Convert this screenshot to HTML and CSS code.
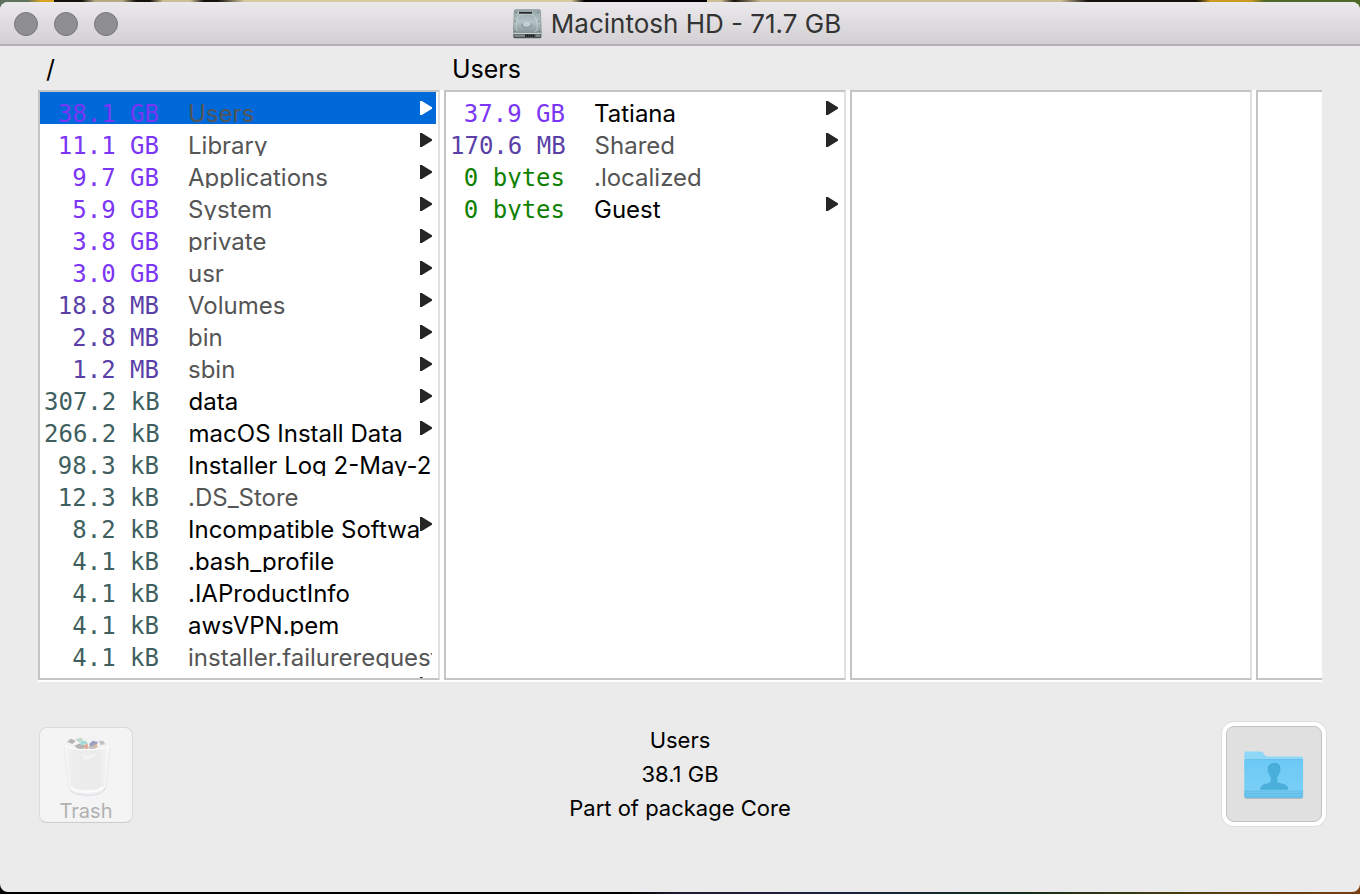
FILE: index.html
```html
<!DOCTYPE html>
<html lang="en">
<head>
  <meta charset="utf-8"/>
  <title>Macintosh HD - 71.7 GB</title>
  <link rel="stylesheet" href="styles.css">
</head>
<body>
  <div class="window">
    <header class="titlebar">
      <div class="lights">
        <button type="button" aria-label="Close"></button>
        <button type="button" aria-label="Minimize"></button>
        <button type="button" aria-label="Zoom"></button>
      </div>
      <h1>
        <svg class="drive" viewBox="102 25 87 90" aria-hidden="true">
          <defs>
            <linearGradient id="metal" x1="0" y1="0" x2="0" y2="1">
              <stop offset="0" stop-color="#94a5a9"/>
              <stop offset="0.5" stop-color="#b4c3c6"/>
              <stop offset="1" stop-color="#839194"/>
            </linearGradient>
          </defs>
          <path d="M103 98h84v11q0 4-4 4h-76q-4 0-4-4z" fill="#4b5254"/>
          <path d="M109 27h72q3 0 3 3l3 67q0 3-3 3h-78q-3 0-3-3l3-67q0-3 3-3z" fill="url(#metal)" stroke="#7f8b8e" stroke-width="2"/>
          <path d="M114 92q-6-14 0-34t28-20q22 0 28 14t4 36l-8 6" fill="none" stroke="#cbd8da" stroke-width="2"/>
          <rect x="118" y="32" width="44" height="9" fill="#d4dddd"/>
          <path d="M120 33h40v6h-40z" fill="#24292b"/>
          <path d="M129 71q6-9 14-9t14 9l3 5q-7 8-17 8t-17-8z" fill="#8e9da1"/>
          <ellipse cx="143" cy="70" rx="11" ry="8" fill="#c3cfd1"/>
          <path d="M103 98h84v2h-84z" fill="#dce4e5"/>
          <path d="M106 102h32v6h-32z" fill="#838e91"/>
          <path d="M138 105h30" stroke="#141718" stroke-width="7" stroke-dasharray="4 2"/>
          <path d="M170 102h14v6h-14z" fill="#838e91"/>
          <g fill="#566164"><circle cx="111" cy="35" r="2"/><circle cx="177" cy="35" r="2"/><circle cx="109" cy="62" r="2"/><circle cx="180" cy="62" r="2"/><circle cx="108" cy="92" r="2"/><circle cx="181" cy="92" r="2"/></g>
        </svg>
        Macintosh HD - 71.7 GB
      </h1>
    </header>

    <main class="browser">
      <div class="paths">
        <h2>/</h2>
        <h2>Users</h2>
      </div>
      <div class="columns">
        <ul class="column" role="listbox" aria-label="/">
          <li class="dir selected locked" role="option" aria-selected="true"><span class="size gb">38.1 GB</span><span class="name">Users</span></li>
          <li class="dir locked" role="option"><span class="size gb">11.1 GB</span><span class="name">Library</span></li>
          <li class="dir locked" role="option"><span class="size gb">9.7 GB</span><span class="name">Applications</span></li>
          <li class="dir locked" role="option"><span class="size gb">5.9 GB</span><span class="name">System</span></li>
          <li class="dir locked" role="option"><span class="size gb">3.8 GB</span><span class="name">private</span></li>
          <li class="dir locked" role="option"><span class="size gb">3.0 GB</span><span class="name">usr</span></li>
          <li class="dir locked" role="option"><span class="size mb">18.8 MB</span><span class="name">Volumes</span></li>
          <li class="dir locked" role="option"><span class="size mb">2.8 MB</span><span class="name">bin</span></li>
          <li class="dir locked" role="option"><span class="size mb">1.2 MB</span><span class="name">sbin</span></li>
          <li class="dir" role="option"><span class="size kb">307.2 kB</span><span class="name">data</span></li>
          <li class="dir" role="option"><span class="size kb">266.2 kB</span><span class="name">macOS Install Data</span></li>
          <li role="option"><span class="size kb">98.3 kB</span><span class="name">Installer Log 2-May-2</span></li>
          <li class="locked" role="option"><span class="size kb">12.3 kB</span><span class="name">.DS_Store</span></li>
          <li class="dir" role="option"><span class="size kb">8.2 kB</span><span class="name">Incompatible Softwa</span></li>
          <li role="option"><span class="size kb">4.1 kB</span><span class="name">.bash_profile</span></li>
          <li role="option"><span class="size kb">4.1 kB</span><span class="name">.IAProductInfo</span></li>
          <li role="option"><span class="size kb">4.1 kB</span><span class="name">awsVPN.pem</span></li>
          <li class="locked" role="option"><span class="size kb">4.1 kB</span><span class="name">installer.failurerequest</span></li>
          <li class="dir" role="option"><span class="size"></span><span class="name"></span></li>
        </ul>
        <ul class="column" role="listbox" aria-label="Users">
          <li class="dir" role="option"><span class="size gb">37.9 GB</span><span class="name">Tatiana</span></li>
          <li class="dir locked" role="option"><span class="size mb">170.6 MB</span><span class="name">Shared</span></li>
          <li class="locked" role="option"><span class="size zero">0 bytes</span><span class="name">.localized</span></li>
          <li class="dir" role="option"><span class="size zero">0 bytes</span><span class="name">Guest</span></li>
        </ul>
        <ul class="column"></ul>
        <ul class="column"></ul>
      </div>
    </main>

    <footer class="footer">
      <button type="button" class="trash" disabled>
        <svg viewBox="90 55 150 192" aria-hidden="true">
          <defs>
            <linearGradient id="can" x1="0" y1="0" x2="1" y2="0">
              <stop offset="0" stop-color="#f6f6f7"/>
              <stop offset="0.2" stop-color="#ececed"/>
              <stop offset="0.8" stop-color="#ebebec"/>
              <stop offset="1" stop-color="#f8f8f9"/>
            </linearGradient>
          </defs>
          <path d="M101 90l16-20 14 2 12-8 26 6 15-5 12 9 16-1 15 15-12 14H112z" fill="#f3f3f3" stroke="#dedede"/>
          <path d="M108 78l12-9 14 7-10 9zM130 90l14-6 18 4-5 12h-16z" fill="#b6b4b4"/>
          <path d="M132 72l17-6 10 9-14 4z" fill="#c2d8cf"/>
          <path d="M143 80l20-5 8 8-18 5z" fill="#9fdcd9"/>
          <path d="M158 90l10-8 6 16-12 3z" fill="#dda99b"/>
          <path d="M175 84l10-9 16 4-6 12-18 8z" fill="#9ba0c0"/>
          <path d="M184 91l12-6 5 8-10 6z" fill="#dfb9a0"/>
          <path d="M204 75l14 2 4 9-14 2zM174 97l12-8 8 8-12 5z" fill="#c3c1c1"/>
          <path d="M101 88Q108 102 168 102T235 88L221 216Q218 237 168 238T116 217z" fill="url(#can)" stroke="#fcfcfc" stroke-width="4"/>
          <path d="M99 88L114 217M237 88L223 216" fill="none" stroke="#e0e0e2" stroke-width="2"/>
          <path d="M115 218Q120 238 168 239T223 216" fill="none" stroke="#d3d9e3" stroke-width="3"/>
          <path d="M120 215Q130 228 168 228T216 213" fill="none" stroke="#fafafa" stroke-width="8"/>
          <path d="M150 116q30 10 48-8-8 22-36 24" fill="#f3f3f3"/>
        </svg>
        <span>Trash</span>
      </button>
      <div class="info">
        <p>Users</p>
        <p>38.1 GB</p>
        <p>Part of package Core</p>
      </div>
      <button type="button" class="target" aria-label="Users folder">
        <svg viewBox="48 48 288 288" aria-hidden="true">
          <defs>
            <linearGradient id="front" x1="0" y1="0" x2="0" y2="1">
              <stop offset="0" stop-color="#6bc9f5"/>
              <stop offset="1" stop-color="#7dd0f6"/>
            </linearGradient>
          </defs>
          <path d="M101 256h180v6q0 6-6 6H107q-6 0-6-6z" fill="#a8adb0"/>
          <path d="M101 128q0-5 5-5h46q4 0 6 3l7 9q2 3 6 3h105q5 0 5 5v40H101z" fill="#8fd7f7"/>
          <path d="M101 152q0-5 5-5h170q5 0 5 5v107q0 6-6 6H107q-6 0-6-6z" fill="url(#front)"/>
          <path d="M104 148h174" stroke="#5fb9e4" stroke-width="2"/>
          <path d="M101 241h180v18q0 6-6 6H107q-6 0-6-6z" fill="#62bfea"/>
          <path d="M101 242h180M101 248h180M101 256h180" stroke="#80cff3" stroke-width="2"/>
          <path d="M150 240q0-13 14-17 16-4 18-8v-13q-5-5-6-12-5-3-3-11 0-20 20-20t18 20q2 8-3 11-1 7-6 12v13q3 4 20 8 14 4 14 17z" fill="#4bafdc"/>
          <path d="M176 174q2-14 17-14t17 14" fill="none" stroke="#3e9fcc" stroke-width="2"/>
        </svg>
      </button>
    </footer>
  </div>
</body>
</html>
```
FILE: styles.css
```css
* {
  box-sizing: border-box;
}
body {
  margin: 0;
  height: 100vh;
  padding: 2px 0;
  display: flex;
  font-family: Inter, sans-serif;
  color: #000;
  /* desktop showing above and below the window */
  background:
    linear-gradient(90deg, #5d7360 0 2%, #d9a520 3% 4%, #14100c 4% 6%, #b5ab85 7% 9%, #14100c 10% 11%, #cdbf95 12% 14%, #14100c 15% 16%, #d8cb9f 18% 27%, #d8cb9f 42%, #000 43% 52%, #cdbf95 52% 53%, #14100c 54%, #cdbf95 56% 78%, #14100c 80% 88%, #c99b22 89% 92%, #4d6827 93%) top / 100% 12px no-repeat,
    linear-gradient(90deg, #000 46%, #241a33 50%, #1a2340 62%, #142c1c 75%, #4d3f10 88%, #7a3d10) bottom / 100% 12px no-repeat;
}
h1, h2, p, ul {
  margin: 0;
  padding: 0;
  font-weight: normal;
}
button {
  padding: 0;
  font-family: inherit;
}
.window {
  flex: 1;
  min-width: 0;
  display: flex;
  flex-direction: column;
  background-color: #ebebeb;
  border-radius: 8px;
  overflow: hidden;
}

/* title bar */
.titlebar {
  height: 44px;
  display: grid;
  grid-template-columns: 1fr auto 1fr;
  align-items: center;
  padding: 2px 14px 0;
  background: linear-gradient(#ebe9eb, #d2d0d2);
  border-bottom: 2px solid #b3b1b3;
}
.lights {
  display: flex;
  gap: 16px;
}
.lights button {
  width: 24px;
  height: 24px;
  border: 1px solid #77767a;
  border-radius: 50%;
  background-color: #8f8e92;
}
.titlebar h1 {
  display: flex;
  align-items: center;
  gap: 9px;
  padding-right: 6px;
  font-size: 26px;
  line-height: 32px;
  color: #333;
}
.drive {
  width: 29px;
  height: 30px;
}

/* column browser */
.browser {
  flex: 1;
  min-height: 0;
  display: flex;
  flex-direction: column;
  padding: 0 38px;
}
.paths {
  height: 44px;
  display: flex;
  gap: 4px;
  overflow: hidden;
}
.paths h2 {
  flex: 0 0 402px;
  padding-left: 8px;
  font-size: 25px;
  line-height: 46px;
}
.columns {
  flex: 1;
  min-height: 0;
  display: flex;
  gap: 4px;
  padding-bottom: 2px;
  background-color: #fff;
  overflow: hidden;
}
.column {
  flex: 0 0 402px;
  border: 2px solid #c4c4c4;
  border-right-color: #e0e0e0;
  padding-right: 2px;
  list-style: none;
  overflow: hidden;
}
.column li {
  display: flex;
  height: 32px;
  padding: 0 4px;
  font-size: 24px;
  line-height: 44px;
  white-space: nowrap;
  overflow: hidden;
}
.size {
  flex: 0 0 115px;
  margin-right: 29px;
  font-family: "DejaVu Sans Mono", monospace;
  text-align: right;
}
.gb {
  color: #7b35f5;
}
.mb {
  color: #5a3fa8;
}
.kb {
  color: #3f5f5f;
}
.zero {
  color: #108000;
}
.name {
  flex: 1;
  min-width: 0;
  overflow: hidden;
}
.locked .name {
  color: #555;
}
.dir::after {
  content: "";
  width: 12px;
  height: 14px;
  margin-top: 9px;
  background-color: #262626;
  clip-path: polygon(0 0, 15% 0, 100% 45%, 100% 55%, 15% 100%, 0 100%);
}
.selected {
  background-color: #0069d9;
}
.selected::after {
  background-color: #fff;
}

/* bottom bar */
.footer {
  height: 210px;
  display: flex;
  justify-content: space-between;
  align-items: flex-start;
  padding: 44px 38px 0;
}
.trash {
  width: 94px;
  height: 96px;
  display: flex;
  flex-direction: column;
  align-items: center;
  margin: 1px;
  padding-top: 6px;
  border: 1px solid #dadada;
  border-bottom-color: #cccccc;
  border-radius: 8px;
  background-color: #f4f4f4;
  font-size: 20px;
  line-height: 26px;
  color: #b1b1b1;
}
.trash svg {
  flex: none;
  width: 50px;
  height: 64px;
}
.info {
  margin-top: -3px;
  font-size: 22px;
  line-height: 34px;
  text-align: center;
}
.target {
  width: 96px;
  height: 96px;
  border: 1px solid #c2c2c2;
  border-radius: 8px;
  background-color: #e0e0e0;
  box-shadow: 0 0 0 4px #fff, 0 0 0 5px #dedede;
}
.target svg {
  display: block;
  width: 100%;
}
```
